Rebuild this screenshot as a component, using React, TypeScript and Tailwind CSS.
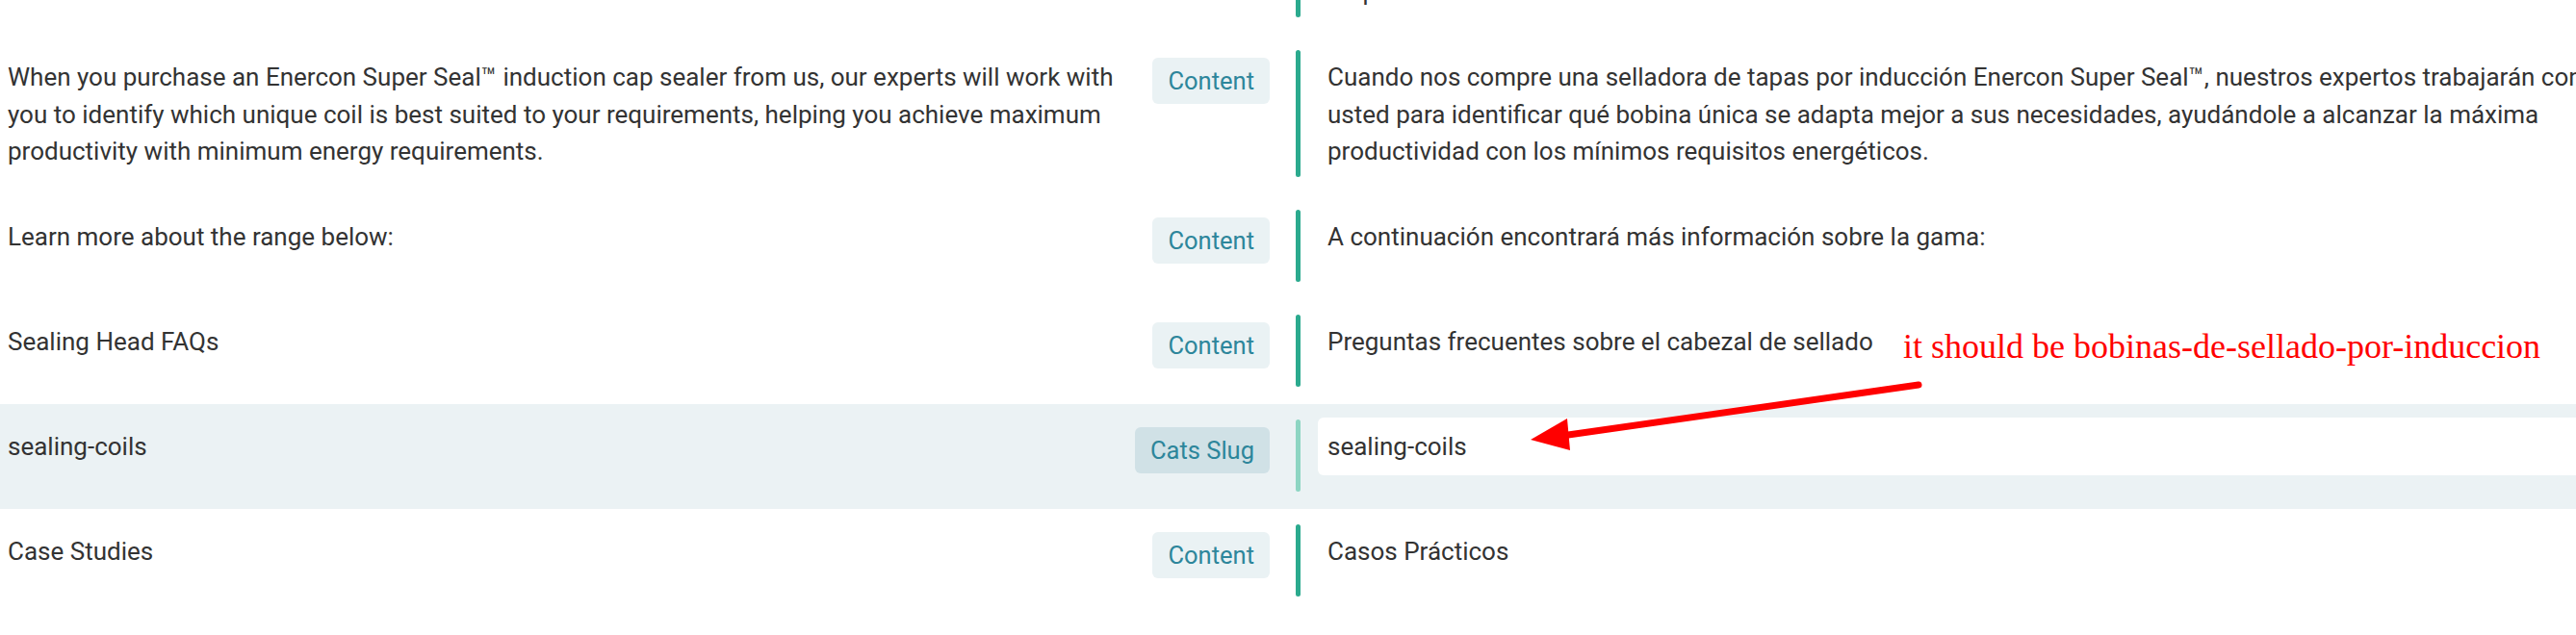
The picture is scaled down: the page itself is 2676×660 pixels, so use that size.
import React from "react";

type RowData = {
  left: React.ReactNode;
  right: React.ReactNode;
  badge: string;
  highlight?: boolean;
};

const rows: RowData[] = [
  {
    left: "Enercon offers a comprehensive range of induction sealing coils, each one designed to suit different cap sizes, materials and line speeds for all of your business needs.",
    right: (
      <>
        Enercon ofrece una amplia gama de bobinas de sellado por inducción, cada una diseñada para adaptarse
        <br />a diferentes tamaños de tapa, materiales y velocidades de línea, cubriendo todas sus necesidades
        <br />empresariales.
      </>
    ),
    badge: "Content",
  },
  {
    left: "When you purchase an Enercon Super Seal™ induction cap sealer from us, our experts will work with you to identify which unique coil is best suited to your requirements, helping you achieve maximum productivity with minimum energy requirements.",
    right: "Cuando nos compre una selladora de tapas por inducción Enercon Super Seal™, nuestros expertos trabajarán con usted para identificar qué bobina única se adapta mejor a sus necesidades, ayudándole a alcanzar la máxima productividad con los mínimos requisitos energéticos.",
    badge: "Content",
  },
  {
    left: "Learn more about the range below:",
    right: "A continuación encontrará más información sobre la gama:",
    badge: "Content",
  },
  {
    left: "Sealing Head FAQs",
    right: "Preguntas frecuentes sobre el cabezal de sellado",
    badge: "Content",
  },
  {
    left: "sealing-coils",
    right: "sealing-coils",
    badge: "Cats Slug",
    highlight: true,
  },
  {
    left: "Case Studies",
    right: "Casos Prácticos",
    badge: "Content",
  },
];

function Row({ row }: { row: RowData }) {
  const hl = !!row.highlight;
  return (
    <div className={hl ? "flex pt-[16px] pb-[18px] bg-[#ebf2f4]" : "flex pt-[16px] pb-[18px]"}>
      <div className="flex w-[1319px] shrink-0 gap-[16px] pl-[8px]">
        <div className="flex-1 pt-[9px] text-[26px] leading-[38.5px]">{row.left}</div>
        <div
          className={
            hl
              ? "mt-[8px] flex h-[48px] shrink-0 items-center self-start rounded-[6px] bg-[#d0e1e6] px-[16px] text-[25.5px] text-[#2d869b]"
              : "mt-[8px] flex h-[48px] shrink-0 items-center self-start rounded-[6px] bg-[#eaf2f4] px-[16px] text-[25.5px] text-[#2d869b]"
          }
        >
          {row.badge}
        </div>
      </div>
      <div
        className={
          hl
            ? "ml-[27px] w-[5px] shrink-0 rounded-[3px] bg-[#8dd5c2]"
            : "ml-[27px] w-[5px] shrink-0 rounded-[3px] bg-[#2baa8e]"
        }
      />
      <div className="min-h-[75px] w-[1369px] shrink-0 pl-[18px]">
        {hl ? (
          <div className="-mt-[2px] rounded-[6px] bg-white px-[10px] pt-[11px] pb-[10.5px] text-[26px] leading-[38.5px]">
            {row.right}
          </div>
        ) : (
          <div className="px-[10px] pt-[9px] pb-[7.5px] text-[26px] leading-[38.5px]">{row.right}</div>
        )}
      </div>
    </div>
  );
}

export default function App() {
  return (
    <div className="relative h-[660px] w-[2676px] overflow-hidden bg-white font-['Roboto',sans-serif] text-[#333333]">
      <div className="-mt-[130px] w-[2720px]">
        {rows.map((r, i) => (
          <Row key={i} row={r} />
        ))}
      </div>
      <div className="absolute left-[1977px] top-[342px] whitespace-nowrap font-['Liberation_Serif',serif] text-[36px] leading-[36px] text-[#ff0000]">
        it should be bobinas-de-sellado-por-induccion
      </div>
      <svg className="pointer-events-none absolute left-0 top-0" width="2676" height="660">
        <line x1="1993" y1="400" x2="1622" y2="453" stroke="#ff0000" strokeWidth="7" strokeLinecap="round" />
        <polygon points="1590,457 1628,435 1631,468" fill="#ff0000" />
      </svg>
    </div>
  );
}
